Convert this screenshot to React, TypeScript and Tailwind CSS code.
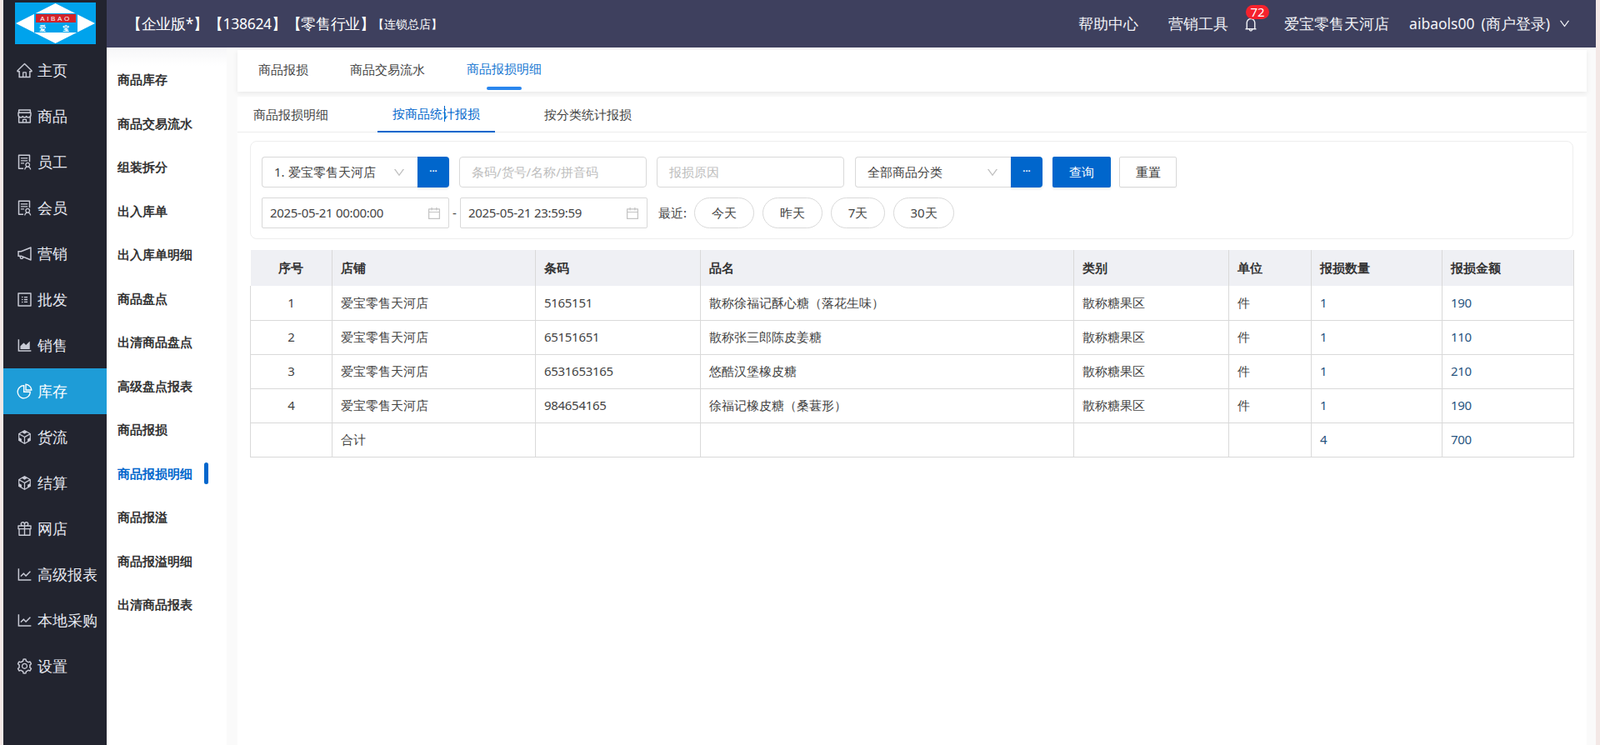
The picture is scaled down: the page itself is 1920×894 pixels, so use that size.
import React from "react";
import {
  AiOutlineHome, AiOutlineShop, AiOutlineSolution, AiOutlineNotification, AiOutlineProfile,
  AiOutlineAreaChart, AiOutlinePieChart, AiOutlineCodeSandbox, AiOutlineGift,
  AiOutlineLineChart, AiOutlineSetting, AiOutlineBell, AiOutlineCalendar, AiOutlineDown,
} from "react-icons/ai";

const nav = [
  { t: "主页", I: AiOutlineHome },
  { t: "商品", I: AiOutlineShop },
  { t: "员工", I: AiOutlineSolution },
  { t: "会员", I: AiOutlineSolution },
  { t: "营销", I: AiOutlineNotification },
  { t: "批发", I: AiOutlineProfile },
  { t: "销售", I: AiOutlineAreaChart },
  { t: "库存", I: AiOutlinePieChart, active: true },
  { t: "货流", I: AiOutlineCodeSandbox },
  { t: "结算", I: AiOutlineCodeSandbox },
  { t: "网店", I: AiOutlineGift },
  { t: "高级报表", I: AiOutlineLineChart },
  { t: "本地采购", I: AiOutlineLineChart },
  { t: "设置", I: AiOutlineSetting },
];

const sub = ["商品库存", "商品交易流水", "组装拆分", "出入库单", "出入库单明细", "商品盘点", "出清商品盘点", "高级盘点报表", "商品报损", "商品报损明细", "商品报溢", "商品报溢明细", "出清商品报表"];

const rows = [
  ["1", "爱宝零售天河店", "5165151", "散称徐福记酥心糖（落花生味）", "散称糖果区", "件", "1", "190"],
  ["2", "爱宝零售天河店", "65151651", "散称张三郎陈皮姜糖", "散称糖果区", "件", "1", "110"],
  ["3", "爱宝零售天河店", "6531653165", "悠酷汉堡橡皮糖", "散称糖果区", "件", "1", "210"],
  ["4", "爱宝零售天河店", "984654165", "徐福记橡皮糖（桑葚形）", "散称糖果区", "件", "1", "190"],
  ["", "合计", "", "", "", "", "4", "700"],
];

const heads = ["序号", "店铺", "条码", "品名", "类别", "单位", "报损数量", "报损金额"];

function Logo() {
  return (
    <svg width="97" height="50" viewBox="0 0 97 50" className="block">
      <rect width="97" height="50" fill="#00a3ec" />
      <polygon points="1,25 48.5,1 96,25 48.5,49" fill="#fff" />
      <rect x="23" y="13" width="52" height="23" fill="#00a3ec" />
      <rect x="25" y="14" width="48" height="10" fill="#d2232a" />
      <text x="49" y="22" textAnchor="middle" fontSize="8" fill="#fff" letterSpacing="2.6" fontFamily="Liberation Sans, sans-serif">AIBAO</text>
      <text x="33" y="33.5" textAnchor="middle" fontSize="8" fontWeight="700" fill="#fff" fontFamily="Noto Sans CJK SC, sans-serif">爱</text>
      <text x="61" y="33.5" textAnchor="middle" fontSize="8" fontWeight="700" fill="#fff" fontFamily="Noto Sans CJK SC, sans-serif">宝</text>
    </svg>
  );
}

function SelectGroup({ label }: { label: string }) {
  return (
    <div className="flex h-[37px] w-[225px]">
      <div className="flex h-full w-[187px] items-center justify-between rounded-l-[4px] border border-r-0 border-[#d9d9d9] bg-white pl-[14px] pr-[14px] text-[#444]">
        <span>{label}</span>
        <AiOutlineDown className="text-[16px] text-[#bfbfbf]" />
      </div>
      <div className="flex h-full w-[38px] items-center justify-center rounded-r-[4px] bg-[#0066cc] pb-[2px] text-[11px] font-bold text-white shadow-[0_2px_3px_rgba(0,0,0,0.08)]">···</div>
    </div>
  );
}

function DateBox({ value }: { value: string }) {
  return (
    <div className="flex h-[37px] w-[225px] items-center justify-between rounded-[2px] border border-[#d9d9d9] bg-white pl-[9px] pr-[8px] text-[#444]">
      <span className="tracking-[-0.3px]">{value}</span>
      <AiOutlineCalendar className="text-[18px] text-[#c4c4c4]" />
    </div>
  );
}

function Pill({ t, w, cls }: { t: string; w: string; cls: string }) {
  return <div className={`flex h-[37px] items-center justify-center rounded-full border border-[#d9d9d9] bg-white text-[#444] ${w} ${cls}`}>{t}</div>;
}

export default function App() {
  return (
    <div className="flex h-[894px] w-[1920px] overflow-hidden bg-[#f3e8e6] pl-1 pr-[5px] [font-family:'Liberation_Sans','Noto_Sans_CJK_SC',sans-serif] text-[15px] text-[#333]">
      <aside className="flex w-[124px] shrink-0 flex-col bg-[#22242f]">
        <div className="h-[57px] pl-[14px] pt-[3px]">
          <Logo />
        </div>
        {nav.map(({ t, I, active }) => (
          <div key={t} className={`flex h-[55px] items-center pl-[15px] text-[17.5px] ${active ? "bg-[#1e9cd7] text-white" : "text-[#e8eaf2]"}`}>
            <I className={`mr-[5px] text-[21px] ${active ? "text-white" : "text-[#c9cbd6]"}`} />
            <span>{t}</span>
          </div>
        ))}
      </aside>

      <main className="flex min-w-0 flex-1 flex-col">
        <header className="flex h-[57px] shrink-0 items-center bg-[#3e405e] pl-[24px] text-white">
          <span className="text-[17.5px] tracking-[-0.3px]">【企业版*】【138624】【零售行业】</span>
          <span className="ml-[-3px] text-[14px] font-medium">【连锁总店】</span>
          <div className="ml-auto flex items-center pr-[30px] text-[17.5px] text-[#f2f3f7]">
            <span>帮助中心</span>
            <span className="ml-[36px]">营销工具</span>
            <div className="relative ml-[19px] flex h-[20px] w-[15px] items-center justify-center">
              <AiOutlineBell className="shrink-0 text-[20px]" />
              <span className="absolute left-[2px] top-[-13px] flex h-[17px] w-[28px] items-center justify-center rounded-[9px] bg-[#f5222d] text-[15px] leading-none text-white">72</span>
            </div>
            <span className="ml-[33px]">爱宝零售天河店</span>
            <span className="ml-[24px]">aibaols00</span>
            <span className="ml-[8px]">(商户登录)</span>
            <AiOutlineDown className="ml-[10px] text-[15px]" />
          </div>
        </header>

        <div className="flex min-h-0 flex-1 bg-[#fafafa]">
          <nav className="w-[144px] shrink-0 bg-white bg-[linear-gradient(#f6f6f8,#ffffff_22px)] pt-[12px]">
            {sub.map((s) => {
              const on = s === "商品报损明细";
              return (
                <div key={s} className={`flex h-[52.5px] items-center justify-between pl-[13px] pr-[22px] font-bold ${on ? "text-[#0066cc]" : "text-[#333]"}`}>
                  <span>{s}</span>
                  {on && <span className="h-[26px] w-[5px] rounded-full bg-[#0066cc]" />}
                </div>
              );
            })}
          </nav>

          <section className="ml-[13px] flex w-[1619px] shrink-0 flex-col pt-[3px]">
            <div className="flex h-[50px] shrink-0 bg-white pl-[25px] shadow-[0_2px_6px_rgba(0,0,0,0.07)]">
              <div className="flex h-full w-[60px] items-center pb-[4px] text-[#444]">商品报损</div>
              <div className="ml-[50px] flex h-full w-[90px] items-center pb-[4px] text-[#444]">商品交易流水</div>
              <div className="ml-[50px] flex h-full w-[90px] flex-col items-center">
                <span className="flex flex-1 items-center pb-0 text-[#1677d2]">商品报损明细</span>
                <span className="mb-[2px] h-[4px] w-[42px] rounded-[2px] bg-[#2a86ee]" />
              </div>
            </div>

            <div className="mt-[6px] flex min-h-0 flex-1 flex-col bg-white">
              <div className="flex h-[43px] shrink-0 border-b border-[#ececec] pl-px">
                <div className="flex h-full items-center px-[18px] text-[#444]">商品报损明细</div>
                <div className="relative -mb-px ml-[41px] flex h-[43px] items-center border-b-2 border-[#0066cc] px-[18px] text-[#0066cc]">
                  按商品统计报损
                  <span className="absolute left-[80px] top-[11px] h-[19px] w-px bg-[#0066cc]" />
                </div>
                <div className="ml-[41px] flex h-full items-center px-[18px] text-[#444]">按分类统计报损</div>
              </div>

              <div className="ml-[15px] mt-[10px] h-[118px] w-[1588px] rounded-[8px] border border-[#eeeeee] pl-[13px] pt-[18px]">
                <div className="flex">
                  <SelectGroup label="1. 爱宝零售天河店" />
                  <div className="ml-[12px] flex h-[37px] w-[225px] items-center rounded-[4px] border border-[#d9d9d9] pl-[14px] text-[#bdbdbd]">条码/货号/名称/拼音码</div>
                  <div className="ml-[12px] flex h-[37px] w-[225px] items-center rounded-[4px] border border-[#d9d9d9] pl-[14px] text-[#bdbdbd]">报损原因</div>
                  <div className="ml-[13px]">
                    <SelectGroup label="全部商品分类" />
                  </div>
                  <div className="ml-[12px] flex h-[37px] w-[70px] items-center justify-center rounded-[2px] bg-[#0066cc] text-white shadow-[0_2px_3px_rgba(0,0,0,0.08)]">查询</div>
                  <div className="ml-[10px] flex h-[37px] w-[69px] items-center justify-center rounded-[2px] border border-[#d9d9d9] text-[#333] shadow-[0_1px_2px_rgba(0,0,0,0.05)]">重置</div>
                </div>
                <div className="mt-[12px] flex items-center">
                  <DateBox value="2025-05-21 00:00:00" />
                  <span className="flex w-[13px] justify-center text-[#444]">-</span>
                  <DateBox value="2025-05-21 23:59:59" />
                  <span className="ml-[13px] text-[#444]">最近:</span>
                  <Pill t="今天" w="w-[72px]" cls="ml-[9px]" />
                  <Pill t="昨天" w="w-[72px]" cls="ml-[10px]" />
                  <Pill t="7天" w="w-[65px]" cls="ml-[10px]" />
                  <Pill t="30天" w="w-[73px]" cls="ml-[10px]" />
                </div>
              </div>

              <table className="ml-[15px] mt-[13px] w-[1588px] table-fixed border-collapse">
                <colgroup>
                  <col className="w-[98px]" />
                  <col className="w-[244px]" />
                  <col className="w-[198px]" />
                  <col className="w-[448px]" />
                  <col className="w-[186px]" />
                  <col className="w-[99px]" />
                  <col className="w-[157px]" />
                  <col className="w-[158px]" />
                </colgroup>
                <thead>
                  <tr className="h-[43px] bg-[#eff0f4]">
                    {heads.map((h, i) => (
                      <th key={h} className={`border-x border-[#d9d9d9] px-[10px] font-bold text-[#333] first:border-l-0 ${i === 0 ? "text-center" : "text-left"}`}>{h}</th>
                    ))}
                  </tr>
                </thead>
                <tbody>
                  {rows.map((r, ri) => (
                    <tr key={ri} className="h-[41px] border-b border-[#d9d9d9]">
                      {r.map((c, i) => (
                        <td key={i} className={`border-x border-[#d9d9d9] px-[10px] pb-[1px] ${i === 0 ? "text-center" : ""} ${i >= 6 ? "tracking-[-0.3px] text-[#28557f]" : "text-[#444]"} ${i === 2 ? "tracking-[-0.3px]" : ""}`}>{c}</td>
                      ))}
                    </tr>
                  ))}
                </tbody>
              </table>
            </div>
          </section>
        </div>
      </main>
    </div>
  );
}
